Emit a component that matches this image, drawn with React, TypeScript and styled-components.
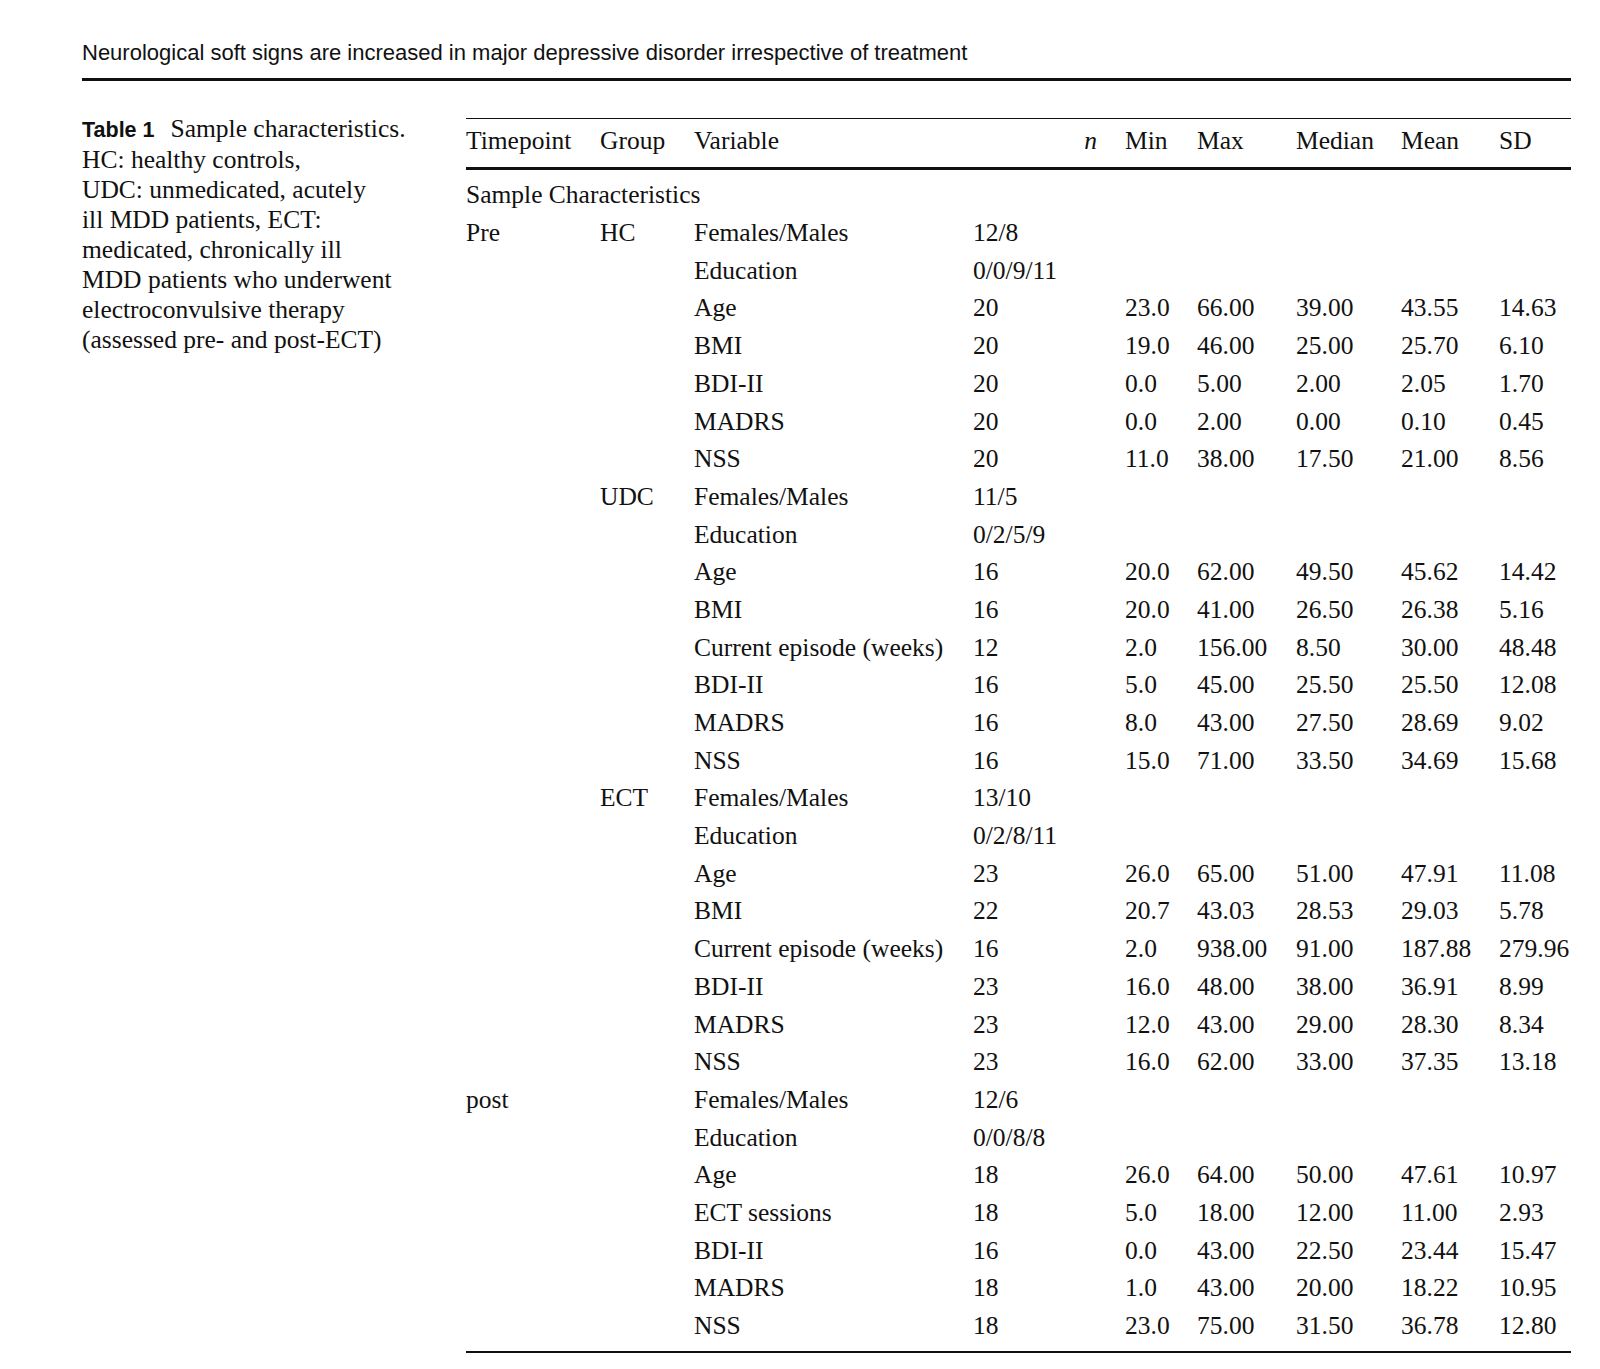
import React from "react";
import styled, { createGlobalStyle } from "styled-components";

const GlobalStyle = createGlobalStyle`
  html, body {
    margin: 0;
    padding: 0;
    background: #ffffff;
  }
  body {
    color: #111111;
    font-family: "Liberation Serif", "Times New Roman", serif;
  }
`;

const Page = styled.div`
  width: 1489px;
  padding: 40px 0 14px 82px;
`;

const RunningHead = styled.header`
  font-family: "Liberation Sans", Arial, sans-serif;
  font-size: 22px;
  line-height: 26px;
  padding-bottom: 12px;
  border-bottom: 3.5px solid #111111;
  white-space: nowrap;
`;

const Main = styled.div`
  display: flex;
  align-items: flex-start;
`;

const Caption = styled.div`
  width: 384px;
  margin-top: 32.5px;
  font-size: 25.5px;
  line-height: 30px;
`;

const CaptionLine = styled.span`
  display: block;
  white-space: nowrap;
`;

const Label = styled.span`
  font-family: "Liberation Sans", Arial, sans-serif;
  font-weight: 700;
  font-size: 21.5px;
  margin-right: 16px;
`;

const Table = styled.div`
  width: 1105px;
  margin-top: 37.2px;
  border-top: 1.6px solid #111111;
  border-bottom: 2px solid #111111;
  font-size: 25.5px;
  padding-bottom: 6.5px;
`;

const cols = "134px 94px 279px 152px 72px 99px 105px 98px 72px";

const HeadRow = styled.div`
  display: grid;
  grid-template-columns: ${cols};
  line-height: 37.7px;
  padding: 2.5px 0 8px;
  border-bottom: 3.3px solid #111111;
  margin-bottom: 6px;
`;

const HeadCell = styled.div<{ $italic?: boolean; $right?: boolean }>`
  white-space: nowrap;
  font-style: ${(p) => (p.$italic ? "italic" : "normal")};
  text-align: ${(p) => (p.$right ? "right" : "left")};
  padding-right: ${(p) => (p.$right ? "28px" : "0")};
`;

const Row = styled.div`
  display: grid;
  grid-template-columns: ${cols};
  height: 37.7px;
  line-height: 37.7px;
`;

const Cell = styled.div`
  white-space: nowrap;
`;

const SectionCell = styled.div`
  grid-column: 1 / -1;
  white-space: nowrap;
`;

type DataRow = [string, string, ...string[]];

type Block = { timepoint: string; group: string; rows: DataRow[] };

const blocks: Block[] = [
  {
    timepoint: "Pre",
    group: "HC",
    rows: [
      ["Females/Males", "12/8"],
      ["Education", "0/0/9/11"],
      ["Age", "20", "23.0", "66.00", "39.00", "43.55", "14.63"],
      ["BMI", "20", "19.0", "46.00", "25.00", "25.70", "6.10"],
      ["BDI-II", "20", "0.0", "5.00", "2.00", "2.05", "1.70"],
      ["MADRS", "20", "0.0", "2.00", "0.00", "0.10", "0.45"],
      ["NSS", "20", "11.0", "38.00", "17.50", "21.00", "8.56"],
    ],
  },
  {
    timepoint: "",
    group: "UDC",
    rows: [
      ["Females/Males", "11/5"],
      ["Education", "0/2/5/9"],
      ["Age", "16", "20.0", "62.00", "49.50", "45.62", "14.42"],
      ["BMI", "16", "20.0", "41.00", "26.50", "26.38", "5.16"],
      ["Current episode (weeks)", "12", "2.0", "156.00", "8.50", "30.00", "48.48"],
      ["BDI-II", "16", "5.0", "45.00", "25.50", "25.50", "12.08"],
      ["MADRS", "16", "8.0", "43.00", "27.50", "28.69", "9.02"],
      ["NSS", "16", "15.0", "71.00", "33.50", "34.69", "15.68"],
    ],
  },
  {
    timepoint: "",
    group: "ECT",
    rows: [
      ["Females/Males", "13/10"],
      ["Education", "0/2/8/11"],
      ["Age", "23", "26.0", "65.00", "51.00", "47.91", "11.08"],
      ["BMI", "22", "20.7", "43.03", "28.53", "29.03", "5.78"],
      ["Current episode (weeks)", "16", "2.0", "938.00", "91.00", "187.88", "279.96"],
      ["BDI-II", "23", "16.0", "48.00", "38.00", "36.91", "8.99"],
      ["MADRS", "23", "12.0", "43.00", "29.00", "28.30", "8.34"],
      ["NSS", "23", "16.0", "62.00", "33.00", "37.35", "13.18"],
    ],
  },
  {
    timepoint: "post",
    group: "",
    rows: [
      ["Females/Males", "12/6"],
      ["Education", "0/0/8/8"],
      ["Age", "18", "26.0", "64.00", "50.00", "47.61", "10.97"],
      ["ECT sessions", "18", "5.0", "18.00", "12.00", "11.00", "2.93"],
      ["BDI-II", "16", "0.0", "43.00", "22.50", "23.44", "15.47"],
      ["MADRS", "18", "1.0", "43.00", "20.00", "18.22", "10.95"],
      ["NSS", "18", "23.0", "75.00", "31.50", "36.78", "12.80"],
    ],
  },
];

export default function App() {
  return (
    <>
      <GlobalStyle />
      <Page>
        <RunningHead>
          Neurological soft signs are increased in major depressive disorder irrespective of treatment
        </RunningHead>
        <Main>
          <Caption>
            <CaptionLine>
              <Label>Table 1</Label>Sample characteristics.
            </CaptionLine>
            <CaptionLine>HC: healthy controls,</CaptionLine>
            <CaptionLine>UDC: unmedicated, acutely</CaptionLine>
            <CaptionLine>ill MDD patients, ECT:</CaptionLine>
            <CaptionLine>medicated, chronically ill</CaptionLine>
            <CaptionLine>MDD patients who underwent</CaptionLine>
            <CaptionLine>electroconvulsive therapy</CaptionLine>
            <CaptionLine>(assessed pre- and post-ECT)</CaptionLine>
          </Caption>
          <Table>
            <HeadRow>
              <HeadCell>Timepoint</HeadCell>
              <HeadCell>Group</HeadCell>
              <HeadCell>Variable</HeadCell>
              <HeadCell $italic $right>
                n
              </HeadCell>
              <HeadCell>Min</HeadCell>
              <HeadCell>Max</HeadCell>
              <HeadCell>Median</HeadCell>
              <HeadCell>Mean</HeadCell>
              <HeadCell>SD</HeadCell>
            </HeadRow>
            <Row>
              <SectionCell>Sample Characteristics</SectionCell>
            </Row>
            {blocks.map((b, bi) =>
              b.rows.map((r, ri) => {
                const values = r.slice(1);
                return (
                  <Row key={`${bi}-${ri}`}>
                    <Cell>{ri === 0 ? b.timepoint : ""}</Cell>
                    <Cell>{ri === 0 ? b.group : ""}</Cell>
                    <Cell>{r[0]}</Cell>
                    {Array.from({ length: 6 }).map((_, ci) => (
                      <Cell key={ci}>{values[ci] ?? ""}</Cell>
                    ))}
                  </Row>
                );
              })
            )}
          </Table>
        </Main>
      </Page>
    </>
  );
}
